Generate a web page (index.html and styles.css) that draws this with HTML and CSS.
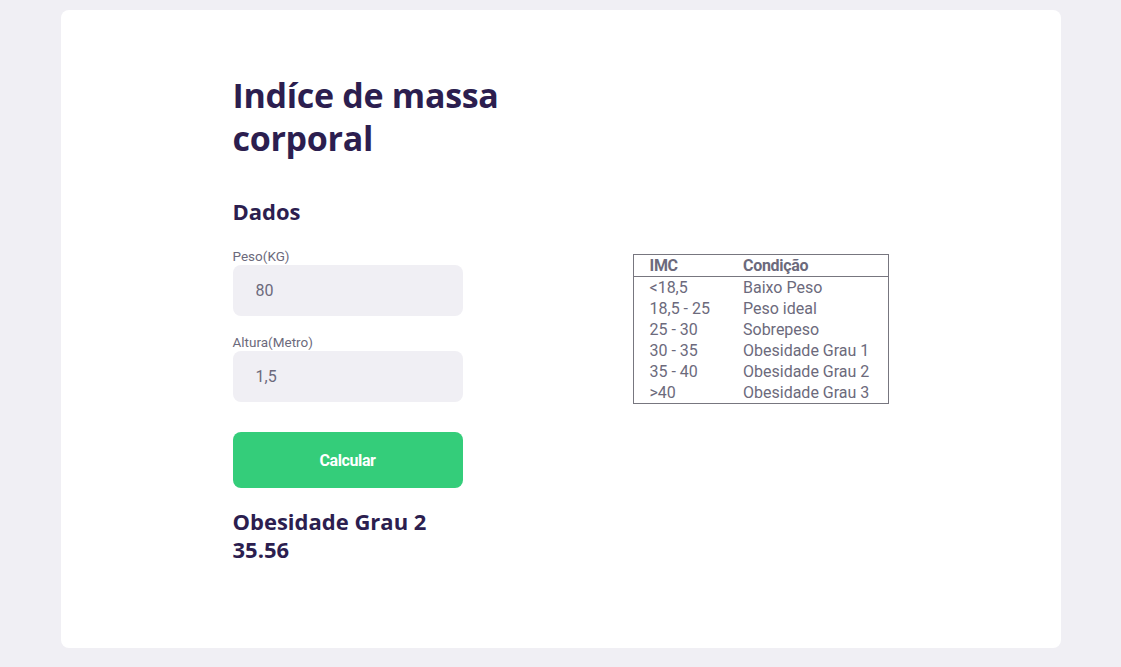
FILE: index.html
```html
<!DOCTYPE html>
<html lang="pt-BR">
<head>
<meta charset="utf-8">
<title>IMC</title>
<link rel="stylesheet" href="styles.css">
</head>
<body>
<main class="card">
  <div class="container">
    <section class="form-col">
      <h1 class="title">Indíce de massa corporal</h1>
      <h2 class="subtitle">Dados</h2>
      <label class="label" for="peso">Peso(KG)</label>
      <input class="input" id="peso" type="text" value="80">
      <label class="label" for="altura">Altura(Metro)</label>
      <input class="input" id="altura" type="text" value="1,5">
      <button class="button" type="button">Calcular</button>
      <div class="result">
        <p>Obesidade Grau 2</p>
        <p>35.56</p>
      </div>
    </section>
    <table class="table">
      <thead>
        <tr><th>IMC</th><th>Condição</th></tr>
      </thead>
      <tbody>
        <tr><td>&lt;18,5</td><td>Baixo Peso</td></tr>
        <tr><td>18,5 - 25</td><td>Peso ideal</td></tr>
        <tr><td>25 - 30</td><td>Sobrepeso</td></tr>
        <tr><td>30 - 35</td><td>Obesidade Grau 1</td></tr>
        <tr><td>35 - 40</td><td>Obesidade Grau 2</td></tr>
        <tr><td>&gt;40</td><td>Obesidade Grau 3</td></tr>
      </tbody>
    </table>
  </div>
</main>
</body>
</html>
```
FILE: styles.css
```css
* { box-sizing: border-box; }
html, body { margin: 0; padding: 0; }
body {
  background: #f0eff4;
  font-family: Roboto, "Liberation Sans", sans-serif;
  padding-top: 10px;
}
.card {
  width: 1000px;
  height: 638px;
  margin: 0 auto;
  background: #ffffff;
  border-radius: 8px;
}
.container {
  width: 656px;
  margin: 0 auto;
  padding-top: 64px;
  display: flex;
  justify-content: space-between;
  align-items: center;
}
.form-col {
  width: 328px;
  display: flex;
  flex-direction: column;
  align-items: flex-start;
}
.title {
  margin: 0;
  font-family: "Open Sans", sans-serif;
  font-weight: 700;
  font-size: 34px;
  line-height: 43px;
  color: #2c1e4f;
  letter-spacing: -0.3px;
}
.subtitle {
  margin: 36px 0 0;
  font-family: "Open Sans", sans-serif;
  font-weight: 700;
  font-size: 22px;
  line-height: 30px;
  color: #2c1e4f;
}
.label {
  margin-top: 23px;
  font-size: 13.5px;
  line-height: 15px;
  color: #6c6a7c;
}
.input {
  margin-top: 1px;
  width: 230px;
  height: 51px;
  border: none;
  border-radius: 8px;
  background: #f0eff4;
  padding: 0 23px;
  font-family: Roboto, sans-serif;
  font-size: 16px;
  color: #6c6a7c;
  outline: none;
}
.input + .label { margin-top: 19px; }
.button {
  margin-top: 30px;
  width: 230px;
  height: 56px;
  border: none;
  border-radius: 8px;
  background: #34cd7a;
  color: #ffffff;
  font-family: Roboto, sans-serif;
  font-weight: 700;
  font-size: 16px;
  letter-spacing: -0.4px;
}
.result {
  margin-top: 19px;
  font-family: "Open Sans", sans-serif;
  font-weight: 700;
  font-size: 22px;
  line-height: 28px;
  color: #2c1e4f;
}
.result p { margin: 0; }
.table {
  border: 1px solid #77767f;
  border-collapse: collapse;
  width: 256px;
  font-size: 16px;
  color: #6c6a7c;
  margin-top: 21px;
}
.table th, .table td {
  text-align: left;
  padding: 0 0 0 16px;
  line-height: 21px;
}
.table th {
  font-weight: 700;
  border-bottom: 1px solid #77767f;
  letter-spacing: -0.3px;
}
.table th:first-child, .table td:first-child { width: 110px; }
.table td:last-child, .table th:last-child { padding-left: 0; }
```
